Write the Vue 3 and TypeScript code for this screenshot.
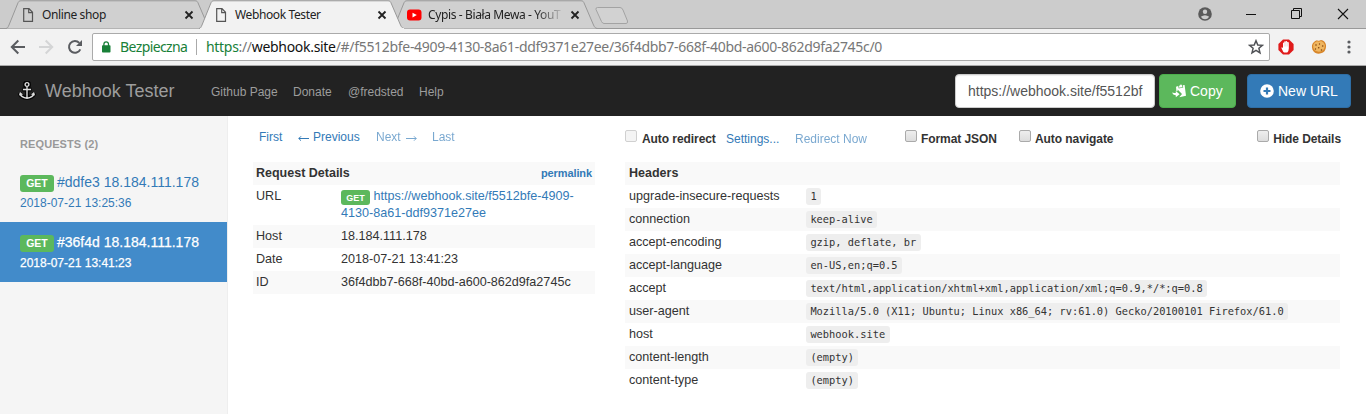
<script setup lang="ts">
interface HeaderRow { name: string; value: string }
interface RequestItem { id: string; ip: string; date: string; active: boolean }

const requests: RequestItem[] = [
  { id: '#ddfe3', ip: '18.184.111.178', date: '2018-07-21 13:25:36', active: false },
  { id: '#36f4d', ip: '18.184.111.178', date: '2018-07-21 13:41:23', active: true },
]

const details = [
  { name: 'Host', value: '18.184.111.178' },
  { name: 'Date', value: '2018-07-21 13:41:23' },
  { name: 'ID', value: '36f4dbb7-668f-40bd-a600-862d9fa2745c' },
]

const headers: HeaderRow[] = [
  { name: 'upgrade-insecure-requests', value: '1' },
  { name: 'connection', value: 'keep-alive' },
  { name: 'accept-encoding', value: 'gzip, deflate, br' },
  { name: 'accept-language', value: 'en-US,en;q=0.5' },
  { name: 'accept', value: 'text/html,application/xhtml+xml,application/xml;q=0.9,*/*;q=0.8' },
  { name: 'user-agent', value: 'Mozilla/5.0 (X11; Ubuntu; Linux x86_64; rv:61.0) Gecko/20100101 Firefox/61.0' },
  { name: 'host', value: 'webhook.site' },
  { name: 'content-length', value: '(empty)' },
  { name: 'content-type', value: '(empty)' },
]

const tabs = [
  { title: 'Online shop', kind: 'page', current: false },
  { title: 'Webhook Tester', kind: 'page', current: true },
  { title: 'Cypis - Biała Mewa - YouT', kind: 'video', current: false },
]
</script>

<template>
  <div class="window">
    <div class="tabstrip">
      <div v-for="tab in tabs" :key="tab.title" class="tab" :class="[tab.kind, { current: tab.current }]">
        <svg class="shape" width="207" height="29" viewBox="0 0 207 29">
          <path d="M0 28.500 C2 28 2 27 3 25 L11.500 4 C12.500 1.500 13 .8 15 .8 H189 C191 .8 191.500 1.500 192.500 4 L201.500 25 C202.500 27 203 28 205 28.500" />
        </svg>
        <svg v-if="tab.kind === 'page'" class="favicon" width="16" height="16" viewBox="0 0 16 16">
          <path d="M3.700 1.700 H9 L12.500 5.300 V14.300 H3.700 Z M8.700 1.700 V5.600 H12.500" fill="none" stroke="#555" stroke-width="1.200" />
        </svg>
        <svg v-else class="favicon" width="16" height="16" viewBox="0 0 16 16">
          <rect x="1" y="2.600" width="14.500" height="11" rx="3" fill="#f00" /><path d="M6.500 5.800 L10.800 8 L6.500 10.400 Z" fill="#fff" />
        </svg>
        <span class="tab-title">{{ tab.title }}</span>
        <svg class="close" width="10" height="10" viewBox="0 0 10 10"><path d="M1.500 1.500 L8.500 8.500 M8.500 1.500 L1.500 8.500" stroke="#222" stroke-width="1.800" /></svg>
      </div>
      <svg class="new-tab" width="36" height="20" viewBox="0 0 36 20"><path d="M3.500 1.500 H26 Q28 1.500 29 4 L33.500 15 Q34 17.500 32 17.500 H10 Q8.500 17.500 7.500 15.500 L2 3.500 Q1.500 1.500 3.500 1.500 Z" fill="#d2d2d2" stroke="#a3a3a3" /></svg>
      <div class="window-buttons">
        <svg width="14" height="14" viewBox="0 0 14 14"><circle cx="7" cy="7" r="6.800" fill="#5a5a5a" /><circle cx="7" cy="4.700" r="2.200" fill="#ccc" /><path d="M2.800 9.700 Q7 6.700 11.200 9.700 Q9.500 12.200 7 12.200 Q4.500 12.200 2.800 9.700 Z" fill="#ccc" /></svg>
        <svg width="10" height="12" viewBox="0 0 10 12"><path d="M0 6.500 H10" stroke="#111" /></svg>
        <svg width="11" height="11" viewBox="0 0 11 11"><path d="M.5 2.500 H8.500 V10.500 H.5 Z M2.500 2.500 V.5 H10.500 V8.500 H8.500" fill="none" stroke="#111" /></svg>
        <svg width="12" height="12" viewBox="0 0 12 12"><path d="M1 1 L11 11 M11 1 L1 11" stroke="#111" stroke-width="1.100" /></svg>
      </div>
    </div>

    <div class="toolbar">
      <svg class="back" width="16" height="16" viewBox="0 0 16 16"><path d="M15 8 H2 M8.300 1.500 L1.800 8 L8.300 14.500" fill="none" stroke="#5a5c60" stroke-width="2" /></svg>
      <svg class="forward" width="16" height="16" viewBox="0 0 16 16"><path d="M1 8 H14 M7.700 1.500 L14.200 8 L7.700 14.500" fill="none" stroke="#d4d5d6" stroke-width="2" /></svg>
      <svg class="reload" width="16" height="16" viewBox="0 0 16 16"><path d="M13.300 10.300 A5.900 5.900 0 1 1 12.300 3.900" fill="none" stroke="#5a5c60" stroke-width="2" /><path d="M15 1 V7 H9 Z" fill="#5a5c60" /></svg>
      <div class="omnibox">
        <svg class="lock" width="10" height="12" viewBox="0 0 10 12"><rect x="1" y="4.300" width="8.500" height="7.200" rx=".8" fill="#188038" /><path d="M2.900 5 V3.200 A2.300 2.300 0 0 1 7.500 3.200 V5" fill="none" stroke="#188038" stroke-width="1.300" /></svg>
        <span class="secure">Bezpieczna</span>
        <i class="divider"></i>
        <span class="address"><span class="scheme">https</span>://<span class="domain">webhook.site</span>/#/f5512bfe-4909-4130-8a61-ddf9371e27ee/36f4dbb7-668f-40bd-a600-862d9fa2745c/0</span>
        <svg class="star" width="16" height="16" viewBox="0 0 16 16"><path d="M8 1.700 L9.800 6 L14.400 6.300 L10.900 9.300 L12 13.900 L8 11.400 L4 13.900 L5.100 9.300 L1.600 6.300 L6.200 6 Z" fill="none" stroke="#505256" stroke-width="1.500" /></svg>
      </div>
      <svg class="blocker" width="16" height="16" viewBox="0 0 16 16"><path d="M5 .4 H11 L15.600 5 V11 L11 15.600 H5 L.4 11 V5 Z" fill="#e01b1b" /><path d="M5.200 12.800 L3.400 8.900 Q3.600 7.800 5 9 V4 Q5.500 3 6.200 4 V2.800 Q6.900 1.900 7.700 2.800 V2.300 Q8.400 1.500 9.200 2.400 V3.300 Q10 2.500 10.800 3.400 V9.500 Q10.800 12 9.300 13.500 H6 Z" fill="#fff" /><path d="M6.300 4 V7.500 M7.800 3 V7.500 M9.300 3.500 V7.500" stroke="#e5a5a5" stroke-width=".4" /></svg>
      <svg class="cookie" width="16" height="16" viewBox="0 0 16 16"><path d="M6 1.200 Q8 2.400 10 1 Q14 1.500 15 6 Q15.500 11 12 13.600 Q8 15.800 4 13.800 Q.3 11 1 6.300 Q2 2.500 6 1.200 Z" fill="#d8862a" /><path d="M6 2.200 Q8 3.200 10 2 Q13 3 13.800 6 Q14 10 11 12 Q7 13.500 4 11.500 Q1.600 9 2.200 6 Q3 3.500 6 2.200 Z" fill="#efb660" /><g fill="#81420f"><circle cx="5" cy="6" r=".8" /><circle cx="8.500" cy="5" r=".7" /><circle cx="11.700" cy="7" r=".8" /><circle cx="7.700" cy="8.800" r=".8" /><circle cx="4.500" cy="10" r=".7" /><circle cx="10.500" cy="11" r=".8" /></g></svg>
      <svg class="menu" width="4" height="14" viewBox="0 0 4 14"><g fill="#5a5c60"><circle cx="2" cy="2" r="1.600" /><circle cx="2" cy="7" r="1.600" /><circle cx="2" cy="12" r="1.600" /></g></svg>
    </div>

    <nav class="navbar">
      <svg class="anchor" width="18" height="20" viewBox="0 0 18 20">
        <g fill="none" stroke="#050505" stroke-width="4"><circle cx="9" cy="3.500" r="2" /><path d="M9 6 V16.500 M4.500 8.500 H13.500 M1.500 12 Q3 16.500 9 17 Q15 16.500 16.500 12" /></g>
        <g fill="none" stroke="#ddd" stroke-width="1.400"><circle cx="9" cy="3.500" r="1.900" /><path d="M9 5.500 V17 M5 8.500 H13 M2 12.500 Q3 16.500 9 17.200 Q15 16.500 16 12.500" /></g>
        <path d="M1 14.500 L2 11 L5 13.500 Z M17 14.500 L16 11 L13 13.500 Z" fill="#ddd" />
      </svg>
      <span class="brand">Webhook Tester</span>
      <a class="nav-github">Github Page</a><a class="nav-donate">Donate</a><a class="nav-author">@fredsted</a><a>Help</a>
      <div class="url-input"><span>https://webhook.site/f5512bf</span></div>
      <button class="btn copy">
        <svg width="14" height="14" viewBox="0 0 14 14"><path d="M4 2.800 L6.200 2.100 L6.700 4.600 L11.300 3.600 L10.700 1.200 L12.600 1 L14 11.800 L7.300 13.200 L10 10 L5.600 5.400 L5.600 7 L4.400 7.200 Z M7 1.800 L8 1.500 Q8.300 0 9.300 .5 L9.900 1.200 L10.400 3 L7.300 3.700 Z" fill="#fff" /><path d="M0 8.600 Q1.200 9.300 3.800 9 V7 L7.600 10.200 L3.800 13.200 V11.200 Q1 11.400 0 8.600 Z" fill="#fff" /></svg>
        <span>Copy</span>
      </button>
      <button class="btn new-url">
        <svg width="14" height="14" viewBox="0 0 14 14"><circle cx="7" cy="7" r="6.800" fill="#fff" /><path d="M7 3.500 V10.500 M3.500 7 H10.500" stroke="#337ab7" stroke-width="2.200" /></svg>
        <span>New URL</span>
      </button>
    </nav>

    <div class="body">
      <aside class="sidebar">
        <div class="side-title">REQUESTS (2)</div>
        <div v-for="r in requests" :key="r.id" class="request" :class="{ active: r.active }">
          <div class="request-top"><span class="badge">GET</span><span class="request-name">{{ r.id }} {{ r.ip }}</span></div>
          <div class="request-date">{{ r.date }}</div>
        </div>
      </aside>
      <main class="main">
        <section class="left-pane">
          <div class="pager">
            <a class="first">First</a>
            <a class="prev"><svg width="12" height="7" viewBox="0 0 12 7"><path d="M.8 3.500 H11 M3 1.300 L.8 3.500 L3 5.700" fill="none" stroke="currentColor" /></svg><span>Previous</span></a>
            <a class="next off"><span>Next</span><svg width="12" height="7" viewBox="0 0 12 7"><path d="M1 3.500 H11.200 M9 1.300 L11.200 3.500 L9 5.700" fill="none" stroke="currentColor" /></svg></a>
            <a class="off">Last</a>
          </div>
          <div class="table">
            <div class="row head"><b>Request Details</b><b class="permalink">permalink</b></div>
            <div class="row url-row"><span class="key">URL</span><span class="url-value"><span class="badge small">GET</span><a>https://webhook.site/f5512bfe-4909-<br>4130-8a61-ddf9371e27ee</a></span></div>
            <div v-for="d in details" :key="d.name" class="row detail"><span class="key">{{ d.name }}</span><span class="value">{{ d.value }}</span></div>
          </div>
        </section>
        <section class="right-pane">
          <div class="options">
            <label class="auto-redirect"><i class="box disabled"></i><b>Auto redirect</b></label>
            <a class="settings">Settings...</a><a class="redirect-now off">Redirect Now</a>
            <label class="format"><i class="box"></i><b>Format JSON</b></label>
            <label class="navigate"><i class="box"></i><b>Auto navigate</b></label>
            <label class="hide"><i class="box"></i><b>Hide Details</b></label>
          </div>
          <div class="table">
            <div class="row head"><b>Headers</b></div>
            <div v-for="h in headers" :key="h.name" class="row"><span class="header-name">{{ h.name }}</span><code>{{ h.value }}</code></div>
          </div>
        </section>
      </main>
    </div>
  </div>
</template>

<style>
body { margin: 0; overflow: hidden; background: #fff; }
</style>

<style scoped>
* { box-sizing: border-box; }
.window { width: 1366px; height: 414px; font-family: "Liberation Sans", Arial, sans-serif; font-size: 12px; color: #333; white-space: nowrap; overflow: hidden; background: #fff; }
svg { display: block; flex: none; }
a { color: #337ab7; text-decoration: none; }
.off { opacity: .65; }

.tabstrip { height: 29px; background: #ccc; border-bottom: 1px solid #999; display: flex; padding-left: 6px; font-family: "Noto Sans", "Open Sans", sans-serif; }
.tab { position: relative; width: 207px; height: 29px; margin-right: -14px; padding-left: 14px; display: flex; align-items: center; flex: none; color: #222; }
.tab.current { z-index: 2; }
.shape { position: absolute; left: 0; top: 0; }
.shape path { fill: #d0d0d0; stroke: #999; }
.current .shape path { fill: #f2f2f2; }
.current::after { content: ""; position: absolute; left: 1px; right: 2px; bottom: 0; height: 1px; background: #f2f2f2; }
.favicon { position: relative; margin-right: 6px; }
.tab-title { position: relative; width: 134px; font-size: 12px; line-height: 18px; height: 18px; letter-spacing: -.38px; }
.video .tab-title { -webkit-mask-image: linear-gradient(to right, #000 108px, transparent 137px); mask-image: linear-gradient(to right, #000 108px, transparent 137px); }
.close { position: relative; margin-left: 8px; }
.new-tab { margin: 6px 0 0 9px; }
.window-buttons { margin-left: auto; display: flex; align-items: center; padding-right: 17px; height: 27px; }
.window-buttons svg { margin-left: 34px; }
.window-buttons svg:nth-child(3), .window-buttons svg:nth-child(4) { margin-left: 35px; }

.toolbar { height: 37px; background: #f2f2f2; border-bottom: 1px solid #aaa; display: flex; align-items: center; padding-left: 10px; }
.forward { margin-left: 12px; }
.reload { margin-left: 13px; }
.omnibox { width: 1178px; height: 28px; margin-left: 9px; border: 1px solid #aaa; border-radius: 2px; background: #fff; display: flex; align-items: center; font-family: "Noto Sans", "Open Sans", sans-serif; font-size: 14px; line-height: 20px; color: #777; }
.lock { margin-left: 8px; }
.secure { width: 69px; margin-left: 9px; color: #188038; letter-spacing: -.6px; }
.divider { width: 1px; height: 16px; background: #aaa; margin: 0 9px 0 7px; }
.address { letter-spacing: -.31px; }
.scheme { color: #188038; }
.domain { color: #111; }
.star { margin-left: auto; margin-right: 5px; }
.blocker { margin-left: 8px; }
.cookie { margin-left: 17px; }
.menu { margin-left: 20px; }

.navbar { height: 50px; background: #222; display: flex; align-items: center; padding: 0 15px 0 18px; }
.navbar a { color: #9d9d9d; font-size: 12px; line-height: 18px; padding-top: 2px; }
.brand { width: 166px; margin-left: 9px; font-size: 18px; line-height: 22px; color: #9d9d9d; }
.nav-github { width: 82px; }
.nav-donate { width: 55px; }
.nav-author { width: 71px; }
.url-input { width: 200px; height: 34px; margin-left: auto; padding: 0 0 0 12px; border: 1px solid #ccc; border-radius: 4px; background: #fff; color: #555; font-size: 14px; line-height: 33px; box-shadow: inset 0 1px 1px rgba(0, 0, 0, .075); }
.btn { height: 34px; padding: 0 12px; border: 1px solid; border-radius: 4px; color: #fff; display: flex; align-items: center; gap: 4px; font: 14px/32px "Liberation Sans", Arial, sans-serif; }
.copy { width: 77px; margin-left: 4px; background: #5cb85c; border-color: #4cae4c; }
.new-url { width: 104px; margin-left: 11px; background: #337ab7; border-color: #2e6da4; }

.body { display: flex; height: 298px; }
.sidebar { width: 228px; border-right: 1px solid #eee; background: #f5f5f5; }
.side-title { height: 46px; padding: 20px 20px 0; font-size: 11px; line-height: 16px; font-weight: bold; color: #999; letter-spacing: .1px; }
.request { height: 60px; padding: 10px 20px; color: #337ab7; }
.request.active { background: #428bca; color: #fff; }
.request-top { display: flex; align-items: center; height: 20px; }
.badge { width: 34px; height: 17px; margin-top: 3px; border-radius: 3px; background: #5cb85c; color: #fff; font-size: 10.500px; font-weight: bold; line-height: 17px; text-align: center; }
.request-name { margin-left: 3px; font-size: 14px; line-height: 20px; }
.request-date { font-size: 12px; line-height: 20px; margin-top: 1px; }
.active .request-date, .active .request-name { -webkit-text-stroke: .25px #fff; }
.main { display: flex; padding-left: 25px; }
.left-pane { width: 342px; }
.right-pane { width: 716px; margin-left: 30px; }
.pager { height: 46px; padding: 12px 0 0 6px; display: flex; line-height: 18px; }
.pager a { display: flex; align-items: center; height: 18px; }
.first { width: 39px; }
.prev { width: 78px; }
.prev svg { margin-right: 3px; margin-top: 2px; }
.next { width: 56px; }
.next svg { margin-left: 4px; margin-top: 2px; }
.table { font-size: 12.600px; line-height: 17px; }
.row { display: flex; height: 23px; padding: 3px 3px; }
.row:nth-child(odd) { background: #f9f9f9; }
.head { justify-content: space-between; font-size: 12.500px; }
.permalink { color: #337ab7; font-size: 11px; letter-spacing: -.1px; line-height: 16px; }
.url-row { height: 40px; }
.key { width: 85px; }
.small { display: inline-block; width: 29px; height: 15px; margin: -2px 3.500px -3px 0; font-size: 9px; line-height: 16px; vertical-align: -1px; }
.options { height: 46px; display: flex; padding-top: 14px; line-height: 18px; }
.options label { display: flex; }
.options b { letter-spacing: -.07px; }
.box { width: 12px; height: 12px; margin-right: 4px; border: 1px solid #aaa; border-radius: 2px; background: linear-gradient(#eee, #ddd); }
.disabled { margin-right: 5px; border-color: #d0d0d0; background: #f4f4f4; }
.auto-redirect { width: 101px; }
.settings { width: 69px; }
.redirect-now { width: 110px; }
.format { width: 114px; }
.hide { margin-left: auto; }
.right-pane .row { width: 715px; padding-left: 4px; }
.header-name { width: 177px; }
code { height: 17px; padding: 0 4.400px; border-radius: 3px; background: #eee; font: 10.350px/17px "DejaVu Sans Mono", monospace; }
</style>
